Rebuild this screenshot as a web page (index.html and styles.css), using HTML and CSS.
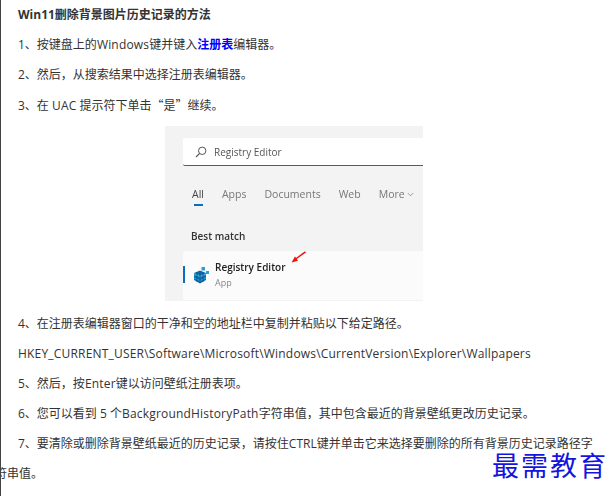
FILE: index.html
```html
<!DOCTYPE html>
<html lang="zh">
<head>
<meta charset="utf-8">
<title>Win11删除背景图片历史记录的方法</title>
<link rel="stylesheet" href="styles.css">
</head>
<body>
<main class="article">
  <p class="line lead"><strong>Win11删除背景图片历史记录的方法</strong></p>
  <p class="line">1、按键盘上的<span class="lat">Windows</span>键并键入<a class="link" href="#">注册表</a>编辑器。</p>
  <p class="line">2、然后，从搜索结果中选择注册表编辑器。</p>
  <p class="line">3、在 <span class="lat">UAC</span> 提示符下单击<span class="cjk">“是”</span>继续。</p>
  <div class="figure">
    <div class="shot">
      <div class="search">
        <svg class="search-icon" width="12" height="12" viewBox="0 0 12 12"><circle cx="7.2" cy="4.8" r="3.7" fill="none" stroke="#555" stroke-width="1"/><path d="M4.600 7.400 1 11" stroke="#555" stroke-width="1.100" fill="none"/></svg>
        <span>Registry Editor</span>
      </div>
      <div class="tabs">
        <span class="tab active">All</span>
        <span class="tab">Apps</span>
        <span class="tab">Documents</span>
        <span class="tab">Web</span>
        <span class="tab">More
          <svg width="7" height="5" viewBox="0 0 7 5"><path d="M.8 1 3.500 3.800 6.200 1" fill="none" stroke="#888" stroke-width=".8"/></svg>
        </span>
      </div>
      <div class="best">Best match</div>
      <div class="result">
        <i class="accent"></i>
        <svg class="reg-icon" width="17" height="18" viewBox="0 0 17 18">
          <path d="M1 7 7 4.500 13 7v7l-6 3.500L1 14z" fill="#0f6fae"/>
          <path d="M1 7l6 2.500L13 7v2l-6 2.500L1 9zM1 11.500l6 2.500 6-2.500v1l-6 2.500-6-2.500z" fill="#39a7dd"/>
          <path d="M7 5v12M4 6v10M10 6v10" stroke="#0b4f86" stroke-width=".8"/>
          <rect x="8.500" y="1" width="3.500" height="3.500" fill="#2a9fd8"/>
          <rect x="13" y="5" width="3" height="3" fill="#2a9fd8"/>
        </svg>
        <div class="result-text">
          <div class="result-name">Registry Editor</div>
          <div class="result-kind">App</div>
        </div>
        <svg class="arrow" width="16" height="13" viewBox="0 0 16 13"><path d="M14.500 .8 4 8.500" stroke="#f01010" stroke-width="1.500"/><path d="M.5 11.500 7 9.800 4 5.500z" fill="#f01010"/></svg>
      </div>
    </div>
  </div>
  <p class="line">4、在注册表编辑器窗口的干净和空的地址栏中复制并粘贴以下给定路径。</p>
  <p class="line lat">HKEY_CURRENT_USER\Software\Microsoft\Windows\CurrentVersion\Explorer\Wallpapers</p>
  <p class="line">5、然后，按<span class="lat">Enter</span>键以访问壁纸注册表项。</p>
  <p class="line">6、您可以看到 5 个<span class="lat">BackgroundHistoryPath</span>字符串值，其中包含最近的背景壁纸更改历史记录。</p>
  <p class="line">7、要清除或删除背景壁纸最近的历史记录，请按住CTRL键并单击它来选择要删除的所有背景历史记录路径字符串值。</p>
</main>
<div class="edge"></div>
<div class="watermark">最需教育</div>
</body>
</html>
```

FILE: styles.css
```css
html, body {
  margin: 0;
  padding: 0;
  height: 100%;
  overflow: hidden;
  background: #fff;
}

body {
  font-family: "Open Sans", "Noto Sans CJK SC", sans-serif;
  font-size: 12px;
  color: #333;
}

.article {
  width: 598px;
  margin-left: -5px;
}

.line {
  margin: 0;
  line-height: 30px;
  text-indent: 23px;
}

.lat {
  letter-spacing: .19px;
}

.cjk {
  font-family: "Noto Sans CJK SC", sans-serif;
}

.lead strong {
  font-weight: 700;
}

.link {
  color: #00f;
  font-weight: 700;
  text-decoration: none;
}

.figure {
  display: flex;
  justify-content: center;
  padding: 5px 0 8px;
}

.shot {
  width: 258px;
  height: 175px;
  box-sizing: border-box;
  padding: 12px 0 0 18px;
  background: #f3f3f3;
  font-family: "Open Sans", sans-serif;
  font-size: 10px;
  color: #555;
  overflow: hidden;
  filter: blur(.25px);
}

.search {
  height: 28px;
  box-sizing: border-box;
  display: flex;
  align-items: center;
  gap: 7px;
  padding-left: 12px;
  background: #fff;
  border-bottom: 1px solid #0f6cbd;
  border-radius: 2px 0 0 2px;
  font-size: 10px;
  color: #555;
}

.tabs {
  display: flex;
  gap: 18px;
  margin: 22px 0 0 9px;
  height: 19px;
  line-height: 13px;
  font-size: 10.500px;
  color: #777;
}

.tab {
  position: relative;
}

.tab svg {
  vertical-align: 1px;
}

.tab.active {
  color: #444;
}

.tab.active::after {
  content: "";
  position: absolute;
  left: 2px;
  top: 16px;
  width: 9px;
  height: 2px;
  background: #0f6cbd;
}

.best {
  margin: 22px 0 0 8px;
  line-height: 14px;
  font-size: 10px;
  font-weight: 600;
  color: #333;
}

.result {
  position: relative;
  display: flex;
  align-items: center;
  gap: 5px;
  height: 49px;
  margin-top: 8px;
  padding-left: 10px;
  background: #fbfbfb;
  border-radius: 3px 0 0 3px;
}

.accent {
  position: absolute;
  left: 0;
  top: 15px;
  width: 2px;
  height: 17px;
  background: #0f6cbd;
}

.reg-icon {
  margin-top: -2px;
}

.result-text {
  margin-top: -2px;
}

.result-name {
  font-size: 10px;
  font-weight: 600;
  line-height: 15px;
  color: #222;
}

.result-kind {
  font-size: 9px;
  line-height: 15px;
  color: #888;
}

.arrow {
  position: absolute;
  left: 108px;
  top: 0;
}

.edge {
  position: absolute;
  left: 0;
  top: 0;
  width: 1px;
  height: 100%;
  background: #444;
}

.watermark {
  position: absolute;
  left: 492px;
  top: 447px;
  font-family: "Noto Sans CJK SC", sans-serif;
  font-size: 27px;
  line-height: 36px;
  letter-spacing: 2px;
  color: #1414e0;
  white-space: nowrap;
}
```
